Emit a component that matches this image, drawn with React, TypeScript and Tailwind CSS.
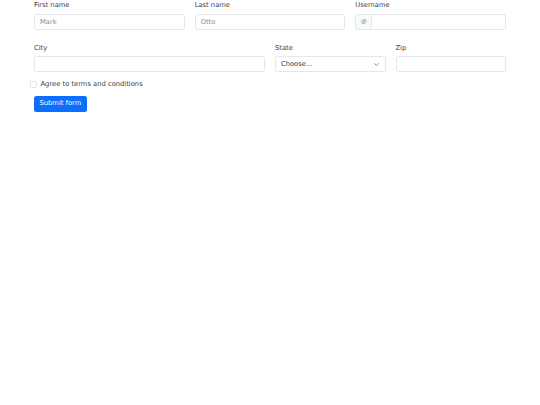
import { useState } from "react";

const labelCls = "block text-[6.75px] leading-[10.125px] text-[#3a3e43] mb-[3.4px]";
const inputCls =
  "block w-full h-[16px] rounded-[2.5px] border border-[#e4e7ea] bg-white px-[5px] text-[6.75px] text-[#3a3e43] outline-none placeholder:text-[#868b90]";

const App = () => {
  const [agree, setAgree] = useState(false);

  return (
    <div className="min-h-[405px] bg-white font-['DejaVu_Sans',sans-serif] text-[#3a3e43]">
      <form className="ml-[34px] w-[472px]" onSubmit={(e) => e.preventDefault()}>
        {/* Row 1 */}
        <div className="grid grid-cols-3 gap-x-[10px]">
          <div>
            <label className={labelCls}>First name</label>
            <input className={inputCls} placeholder="Mark" />
          </div>
          <div>
            <label className={labelCls}>Last name</label>
            <input className={inputCls} placeholder="Otto" />
          </div>
          <div>
            <label className={labelCls}>Username</label>
            <div className="flex h-[16px] w-full">
              <span className="flex w-[17px] items-center justify-center rounded-l-[2.5px] border border-[#e4e7ea] bg-[#f8f9fa] text-[5.5px] text-[#6c757d]">
                @
              </span>
              <input className="h-[16px] min-w-0 flex-1 rounded-r-[2.5px] border border-l-0 border-[#e4e7ea] bg-white px-[5px] text-[6.75px] outline-none" />
            </div>
          </div>
        </div>

        {/* Row 2 */}
        <div className="mt-[13px] grid grid-cols-12 gap-x-[10px]">
          <div className="col-span-6">
            <label className={labelCls}>City</label>
            <input className={inputCls} />
          </div>
          <div className="col-span-3">
            <label className={labelCls}>State</label>
            <div className="relative">
              <div className="flex h-[16px] w-full items-center rounded-[2.5px] border border-[#e4e7ea] bg-white px-[5px] text-[6.75px] text-[#3a3e43]">
                Choose...
              </div>
              <svg
                className="absolute right-[7px] top-[6.5px]"
                width="5"
                height="3"
                viewBox="0 0 10 6"
                fill="none"
                stroke="#50565c"
                strokeWidth="1.3"
                strokeLinecap="round"
                strokeLinejoin="round"
              >
                <polyline points="1,1 5,5 9,1" />
              </svg>
            </div>
          </div>
          <div className="col-span-3">
            <label className={labelCls}>Zip</label>
            <input className={inputCls} />
          </div>
        </div>

        {/* Checkbox */}
        <div className="mt-[7px] flex h-[10px] items-center">
          <span
            onClick={() => setAgree(!agree)}
            className={`-ml-[4px] mr-[3.5px] h-[7px] w-[7px] rounded-[1.5px] border border-[#e0e3e6] ${agree ? "bg-[#0d6efd]" : "bg-white"}`}
          />
          <label className="text-[6.75px] leading-[10.125px]">Agree to terms and conditions</label>
        </div>

        {/* Submit */}
        <button
          type="submit"
          className="mt-[6.5px] flex h-[16px] items-center rounded-[2.5px] bg-[#0d6efd] px-[5.5px] text-[6.75px] text-white"
        >
          Submit form
        </button>
      </form>
    </div>
  );
};

export default App;
